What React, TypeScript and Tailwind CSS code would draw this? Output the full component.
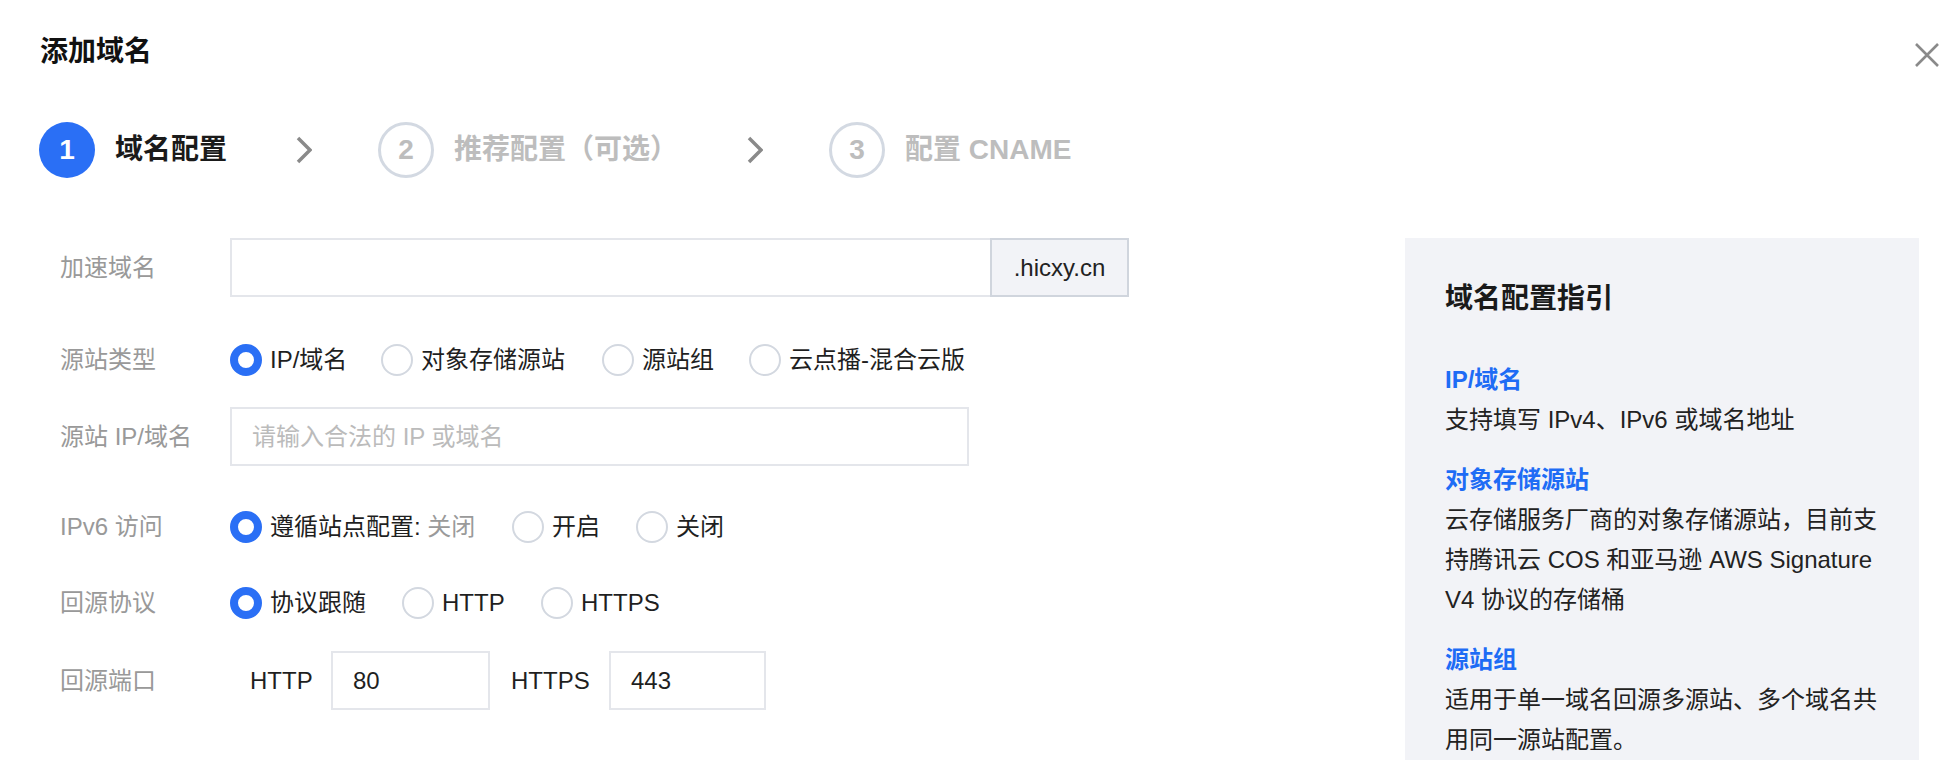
import React from 'react';

const SOURCE_TYPES = [
  { label: 'IP/域名', checked: true, w: 'w-[151px]' },
  { label: '对象存储源站', w: 'w-[221px]' },
  { label: '源站组', w: 'w-[147px]' },
  { label: '云点播-混合云版', w: '' },
];

const IPV6_OPTIONS = [
  { label: '遵循站点配置:', suffix: ' 关闭', checked: true, w: 'w-[282px]' },
  { label: '开启', w: 'w-[124px]' },
  { label: '关闭', w: '' },
];

const PROTOCOLS = [
  { label: '协议跟随', checked: true, w: 'w-[172px]' },
  { label: 'HTTP', w: 'w-[139px]' },
  { label: 'HTTPS', w: '' },
];

type Option = { label: string; checked?: boolean; suffix?: string; w: string };

const Radio = ({ label, checked, suffix, w }: Option) => (
  <label className={`flex items-center shrink-0 ${w}`}>
    <span
      className={`w-[32px] h-[32px] rounded-full bg-white shrink-0 ${
        checked ? 'border-[8px] border-[#2a6ff5]' : 'border-2 border-[#d3d8e0]'
      }`}
    />
    <span className="ml-[8px] text-[24px] text-[#1f1f1f] whitespace-nowrap">
      {label}
      {suffix && <span className="text-[#9a9a9a]">{suffix}</span>}
    </span>
  </label>
);

const Row: React.FC<{ label: string; className?: string; children: React.ReactNode }> = ({
  label,
  className = '',
  children,
}) => (
  <div className={`flex items-center h-[59px] ${className}`}>
    <div className="w-[170px] shrink-0 text-[24px] text-[#999999] whitespace-nowrap">{label}</div>
    {children}
  </div>
);

const Chevron = () => (
  <svg width="16" height="28" viewBox="0 0 16 28" className="shrink-0">
    <polyline points="2,2 14,14 2,26" fill="none" stroke="#8a8a8a" strokeWidth="3.5" />
  </svg>
);

const Step: React.FC<{ n: number; label: string; active?: boolean }> = ({ n, label, active }) => (
  <div className="flex items-center shrink-0">
    <div
      className={`w-[56px] h-[56px] rounded-full flex items-center justify-center text-[28px] font-bold ${
        active ? 'bg-[#2a6ff5] text-white' : 'border-[3px] border-[#d3d9e2] text-[#bdbdbd]'
      }`}
    >
      {n}
    </div>
    <span
      className={`ml-[20px] text-[28px] font-bold whitespace-nowrap ${
        active ? 'text-[#1a1a1a]' : 'text-[#bdbdbd]'
      }`}
    >
      {label}
    </span>
  </div>
);

const GUIDE = [
  { title: 'IP/域名', lines: ['支持填写 IPv4、IPv6 或域名地址'] },
  {
    title: '对象存储源站',
    lines: ['云存储服务厂商的对象存储源站，目前支', '持腾讯云 COS 和亚马逊 AWS Signature', 'V4 协议的存储桶'],
  },
  { title: '源站组', lines: ['适用于单一域名回源多源站、多个域名共', '用同一源站配置。'] },
];

export default function App() {
  return (
    <div className="w-[1960px] h-[760px] overflow-hidden bg-white text-[#1f1f1f] [font-family:'Liberation_Sans','Noto_Sans_CJK_SC',sans-serif]">
      {/* header */}
      <div className="flex items-start justify-between pl-[40px] pr-[21px] pt-[34px]">
        <h1 className="text-[28px] leading-[36px] font-bold text-[#111111]">添加域名</h1>
        <svg width="24" height="24" viewBox="0 0 24 24" className="mt-[9px]">
          <path d="M1 1 L23 23 M23 1 L1 23" stroke="#8a8a8a" strokeWidth="2.6" />
        </svg>
      </div>

      {/* steps */}
      <div className="flex items-center h-[56px] mt-[52px] pl-[39px]">
        <Step n={1} label="域名配置" active />
        <div className="ml-[69px] mr-[66px]">
          <Chevron />
        </div>
        <Step n={2} label="推荐配置（可选）" />
        <div className="ml-[69px] mr-[66px]">
          <Chevron />
        </div>
        <Step n={3} label="配置 CNAME" />
      </div>

      <div className="flex items-start mt-[60px]">
        {/* form */}
        <div className="flex flex-col pl-[60px]">
          <Row label="加速域名">
            <div className="flex h-[59px]">
              <div className="w-[760px] h-full border-2 border-r-0 border-[#e4e6eb] bg-white" />
              <div className="w-[139px] h-full border-2 border-[#d0d5dd] bg-[#f2f3f7] flex items-center justify-center text-[24px] text-[#222222]">
                .hicxy.cn
              </div>
            </div>
          </Row>

          <Row label="源站类型" className="mt-[33px]">
            {SOURCE_TYPES.map(o => (
              <Radio key={o.label} {...o} />
            ))}
          </Row>

          <Row label="源站 IP/域名" className="mt-[18px]">
            <div className="w-[739px] h-[59px] border-2 border-[#e4e6eb] flex items-center pl-[20px] text-[24px] text-[#bbbbbb]">
              请输入合法的 IP 或域名
            </div>
          </Row>

          <Row label="IPv6 访问" className="mt-[31px]">
            {IPV6_OPTIONS.map(o => (
              <Radio key={o.label} {...o} />
            ))}
          </Row>

          <Row label="回源协议" className="mt-[17px]">
            {PROTOCOLS.map(o => (
              <Radio key={o.label} {...o} />
            ))}
          </Row>

          <Row label="回源端口" className="mt-[19px]">
            <div className="flex items-center">
              <span className="w-[101px] pl-[20px] text-[24px] text-[#1f1f1f]">HTTP</span>
              <div className="w-[159px] h-[59px] border-2 border-[#e4e6eb] flex items-center pl-[20px] text-[24px] text-[#1f1f1f]">
                80
              </div>
              <span className="w-[119px] pl-[21px] text-[24px] text-[#1f1f1f]">HTTPS</span>
              <div className="w-[157px] h-[59px] border-2 border-[#e4e6eb] flex items-center pl-[20px] text-[24px] text-[#1f1f1f]">
                443
              </div>
            </div>
          </Row>
        </div>

        {/* guide panel */}
        <aside className="ml-auto mr-[41px] w-[514px] bg-[#f2f3f7] px-[40px] pt-[43px] pb-[40px] shrink-0">
          <h2 className="text-[28px] leading-[36px] font-bold text-[#1a1a1a]">域名配置指引</h2>
          <div className="mt-[43px] flex flex-col gap-[20px]">
            {GUIDE.map(g => (
              <div key={g.title}>
                <div className="text-[24px] leading-[40px] font-bold text-[#1e6cf5]">{g.title}</div>
                {g.lines.map(l => (
                  <div key={l} className="text-[24px] leading-[40px] text-[#222222] whitespace-nowrap">
                    {l}
                  </div>
                ))}
              </div>
            ))}
          </div>
        </aside>
      </div>
    </div>
  );
}
